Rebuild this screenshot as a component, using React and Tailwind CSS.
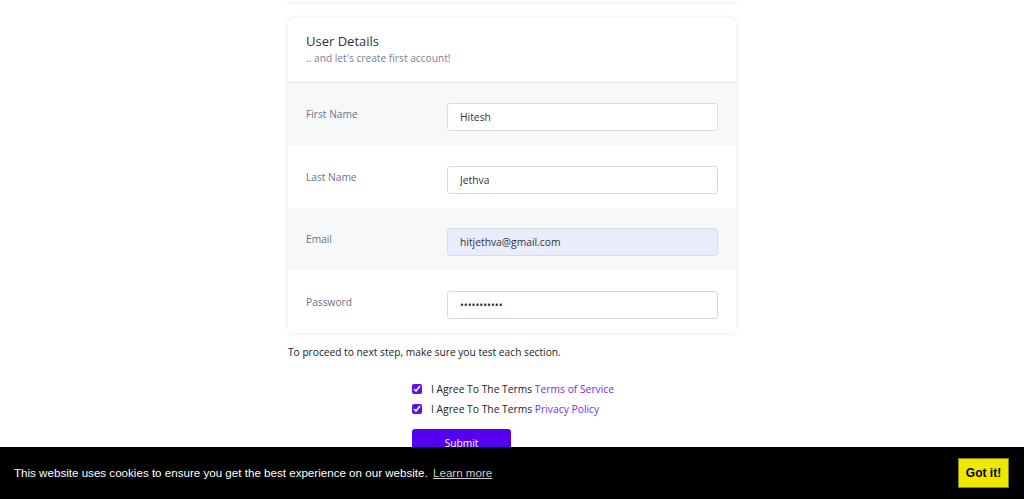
const rows = [
  { label: 'First Name', value: 'Hitesh', type: 'text', shaded: true },
  { label: 'Last Name', value: 'Jethva', type: 'text', shaded: false },
  { label: 'Email', value: 'hitjethva@gmail.com', type: 'email', shaded: true, filled: true },
  { label: 'Password', value: 'hitesh12345', type: 'password', shaded: false },
]

function FieldRow({ label, value, type, shaded, filled }) {
  return (
    <div className={`flex pl-[18px] pr-[18px] pt-5 pb-[14.5px] ${shaded ? 'bg-[#f7f8fa]' : 'bg-white'}`}>
      <label className="mt-[4px] w-[141px] shrink-0 text-[10.2px] text-[#6b7280]">{label}</label>
      <input
        className={`h-[28px] w-full rounded-[3px] border border-[#d9dbe0] px-3 text-[10.3px] text-[#333] outline-none ${filled ? 'bg-[#e8ecfd]' : 'bg-white'}`}
        type={type}
        defaultValue={value}
        readOnly
      />
    </div>
  )
}

function Agree({ link }) {
  return (
    <label className="flex h-[16px] items-center gap-[9px] text-[10.3px] text-[#222]">
      <input type="checkbox" defaultChecked className="h-[10px] w-[10px] accent-[#5a10f0]" />
      <span>
        I Agree To The Terms <span className="text-[#7a2cf0]">{link}</span>
      </span>
    </label>
  )
}

export default function App() {
  return (
    <div className="min-h-screen bg-white pb-20" style={{ fontFamily: '"Open Sans", sans-serif' }}>
      <div className="mx-auto w-[448px]">
        <div className="h-[2px] rounded-b-md bg-white shadow-[0_1px_3px_rgba(0,0,0,0.12)]" />

        <div className="mt-4 overflow-hidden rounded-md bg-white shadow-[0_0_4px_rgba(0,0,0,0.1)]">
          <div className="border-b border-[#e8e9ec] px-[18px] pb-[17px] pt-[14px]">
            <h2 className="text-[13px] leading-[18px] text-[#2d3340]">User Details</h2>
            <p className="mt-[1px] text-[10.2px] leading-[14px] text-[#7b8190]">.. and let's create first account!</p>
          </div>
          {rows.map((r) => (
            <FieldRow key={r.label} {...r} />
          ))}
        </div>

        <p className="mt-[12px] text-[10.2px] text-[#222]">To proceed to next step, make sure you test each section.</p>

        <div className="ml-[124px] mt-[21px] flex flex-col gap-[4px]">
          <Agree link="Terms of Service" />
          <Agree link="Privacy Policy" />
          <button type="button" className="mt-[8px] h-[28px] w-[99px] rounded-[3px] bg-[#5600f0] text-[10.2px] text-white">
            Submit
          </button>
        </div>
      </div>

      <div className="fixed bottom-0 left-0 right-0 flex h-[52px] items-center justify-between bg-black pl-[14px] pr-[15px]" style={{ fontFamily: '"Liberation Sans", Arial, sans-serif' }}>
        <p className="text-[11.6px] text-white">
          This website uses cookies to ensure you get the best experience on our website.{' '}
          <span className="ml-[2px] text-[#cfcfcf] underline">Learn more</span>
        </p>
        <button type="button" className="h-[30px] w-[51px] border border-[#8a8500] bg-[#ede800] text-[12px] font-bold text-black">
          Got it!
        </button>
      </div>
    </div>
  )
}
